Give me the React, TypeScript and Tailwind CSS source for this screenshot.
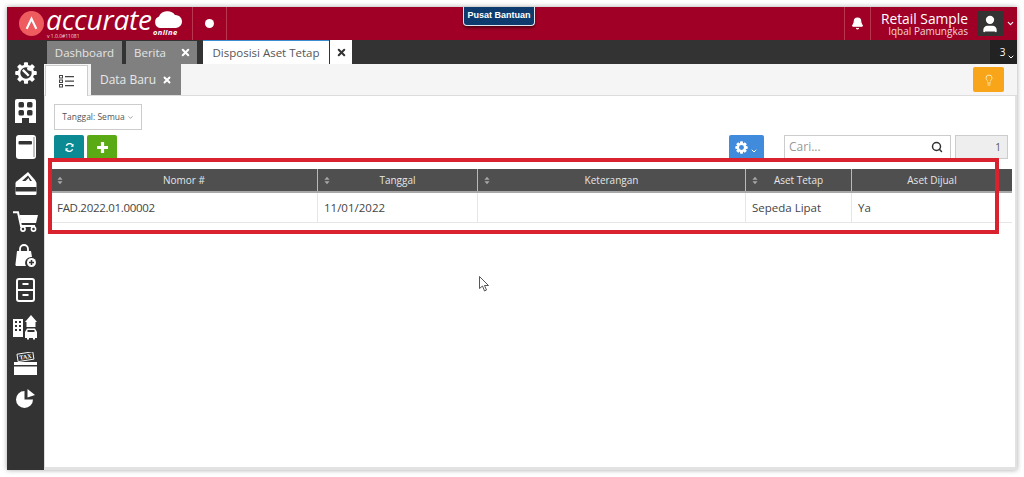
import { Bell, ChevronDown, Lightbulb, Search, User, X } from 'lucide-react';

const SANS = 'font-["Open_Sans",sans-serif]';

function SortIcon() {
  return (
    <svg width="6" height="9" viewBox="0 0 7 10" className="shrink-0">
      <path d="M3.5 0.5 L6.5 4 H0.5 Z M3.5 9.5 L0.5 6 H6.5 Z" fill="#a8a8a8" />
    </svg>
  );
}

function GearIcon({ size, hole = '#333333', color = 'white' }: { size: number; hole?: string; color?: string }) {
  return (
    <svg width={size} height={size} viewBox="0 0 24 24">
      <g fill={color}>
        {[0, 45, 90, 135, 180, 225, 270, 315].map((a) => (
          <rect key={a} x="9.5" y="1" width="5" height="22" rx="1" transform={`rotate(${a} 12 12)`} />
        ))}
        <circle cx="12" cy="12" r="8.5" />
      </g>
      <circle cx="12" cy="12" r="4.5" fill={hole} />
    </svg>
  );
}

function SideIcons() {
  return (
    <div className="flex flex-col items-center w-[37px] bg-[#333333] shrink-0">
      {/* settings */}
      <div className="h-[38px] flex items-center justify-center">
        <svg width="22" height="22" viewBox="0 0 24 24">
          <g fill="white">
            {[0, 45, 90, 135, 180, 225, 270, 315].map((a) => (
              <rect key={a} x="9.8" y="0.5" width="4.4" height="23" rx="1" transform={`rotate(${a} 12 12)`} />
            ))}
            <circle cx="12" cy="12" r="9" />
          </g>
          <circle cx="12" cy="12" r="6.2" fill="#333333" />
          <path d="M8.5 8.5 L15 15" stroke="white" strokeWidth="2.6" fill="none" />
          <path d="M13 6.5 A3.2 3.2 0 0 1 17.6 10 L15 9.2 L13.8 9 Z" fill="white" />
        </svg>
      </div>
      {/* company */}
      <div className="h-[38px] flex items-center justify-center">
        <svg width="21" height="24" viewBox="0 0 21 24">
          <path d="M2 0 H19 A2 2 0 0 1 21 2 V24 H14 V19 H7 V24 H0 V2 A2 2 0 0 1 2 0 Z" fill="white" />
          <rect x="3.5" y="3" width="5.5" height="5.5" rx="1.5" fill="#333333" />
          <rect x="12" y="3" width="5.5" height="5.5" rx="1.5" fill="#333333" />
          <rect x="3.5" y="11" width="5.5" height="5.5" rx="1.5" fill="#333333" />
          <rect x="12" y="11" width="5.5" height="5.5" rx="1.5" fill="#333333" />
        </svg>
      </div>
      {/* ledger */}
      <div className="h-[34px] flex items-center justify-center">
        <svg width="20" height="24" viewBox="0 0 20 24">
          <rect x="0" y="0" width="20" height="24" rx="3" fill="white" />
          <rect x="2.5" y="6" width="13.5" height="3.5" rx="1" fill="#333333" />
          <rect x="17.5" y="2" width="1" height="20" fill="#8a8a8a" />
        </svg>
      </div>
      {/* cash */}
      <div className="h-[38px] flex items-center justify-center">
        <svg width="22" height="24" viewBox="0 0 22 24">
          <path d="M1 11 L13 1 L20 9 L21 11 Z" fill="white" />
          <path d="M7 10 L13 4.5 L17 10 Z" fill="#333333" />
          <path d="M10.5 10 L13.5 7 L15 10 Z" fill="white" />
          <rect x="0.5" y="10.5" width="21" height="13.5" rx="1.5" fill="white" />
          <rect x="0.5" y="16" width="21" height="4.5" fill="#333333" />
        </svg>
      </div>
      {/* cart */}
      <div className="h-[38px] flex items-center justify-center">
        <svg width="25" height="21" viewBox="0 0 25 21">
          <path d="M0 1.2 H5 L8 15 H22" stroke="white" strokeWidth="2" fill="none" />
          <path d="M6.5 4 H25 L23 12 H8 Z" fill="white" />
          <circle cx="10" cy="18" r="2.1" fill="none" stroke="white" strokeWidth="1.6" />
          <circle cx="20.5" cy="18" r="2.1" fill="none" stroke="white" strokeWidth="1.6" />
        </svg>
      </div>
      {/* bag plus */}
      <div className="h-[32px] flex items-center justify-center">
        <svg width="22" height="24" viewBox="0 0 22 24">
          <path d="M5 7 V5 A4 4 0 0 1 13 5 V7" stroke="white" strokeWidth="1.8" fill="none" />
          <path d="M2 7 H16 L17 13 A6 6 0 0 0 11 22 H2 A1.5 1.5 0 0 1 0.5 20 Z" fill="white" />
          <circle cx="16.5" cy="18.5" r="4.5" fill="white" />
          <path d="M14 18.5 H19 M16.5 16 V21" stroke="#333333" strokeWidth="1.5" />
        </svg>
      </div>
      {/* cabinet */}
      <div className="h-[36px] flex items-center justify-center">
        <svg width="19" height="24" viewBox="0 0 19 24">
          <rect x="1" y="1" width="17" height="22" rx="2" fill="none" stroke="white" strokeWidth="2" />
          <rect x="1" y="11" width="17" height="2" fill="white" />
          <rect x="6.5" y="5" width="6" height="2" fill="white" />
          <rect x="6.5" y="16" width="6" height="2" fill="white" />
        </svg>
      </div>
      {/* assets */}
      <div className="h-[38px] flex items-center justify-center">
        <svg width="25" height="26" viewBox="0 0 25 26">
          <rect x="0" y="5" width="10" height="18" fill="white" />
          <g fill="#333333">
            <rect x="2" y="7" width="2" height="2" /><rect x="6" y="7" width="2" height="2" />
            <rect x="2" y="11" width="2" height="2" /><rect x="6" y="11" width="2" height="2" />
            <rect x="2" y="15" width="2" height="2" /><rect x="6" y="15" width="2" height="2" />
          </g>
          <path d="M12 8 L18 1 L24 8 H22.5 V13 H13.5 V8 Z" fill="white" />
          <path d="M12 18 L14 14.5 H22 L24 18 V24 H22 V25.5 H20 V24 H16 V25.5 H14 V24 H12 Z" fill="white" />
          <rect x="14.5" y="16" width="7" height="2" fill="#333333" />
        </svg>
      </div>
      {/* tax */}
      <div className="h-[34px] flex items-center justify-center">
        <svg width="23" height="23" viewBox="0 0 23 23">
          <g transform="rotate(-9 11 5)">
            <rect x="3.5" y="1" width="16" height="7.5" fill="none" stroke="white" strokeWidth="0.9" />
            <text x="11.5" y="7" textAnchor="middle" fontSize="6" fontWeight="700" fill="white" fontFamily="Liberation Serif, serif">TAX</text>
          </g>
          <rect x="0" y="10" width="23" height="3" fill="white" />
          <rect x="0" y="14.5" width="23" height="8.5" fill="white" />
        </svg>
      </div>
      {/* chart */}
      <div className="h-[38px] flex items-center justify-center">
        <svg width="20" height="20" viewBox="0 0 20 20">
          <path d="M8.5 2 V10.5 H17 A8.5 8.5 0 1 1 8.5 2 Z" fill="white" />
          <path d="M11.5 0 L19 6 L11.5 8.5 Z" fill="white" />
        </svg>
      </div>
    </div>
  );
}

function HeaderCell({ w, label, sort = true }: { w: string; label: string; sort?: boolean }) {
  return (
    <div className={`${w} shrink-0 h-full flex items-center pl-[6px] pr-[12px] border-r border-[#b9b9b9] last:border-r-0`}>
      {sort ? <SortIcon /> : <div className="w-[6px]" />}
      <span className="flex-1 text-center text-[10px] text-[#e6e6e6]">{label}</span>
    </div>
  );
}

function BodyCell({ w, text, cls = '' }: { w: string; text?: string; cls?: string }) {
  return (
    <div className={`${w} shrink-0 h-full flex items-center pl-[6px] border-r border-[#e6e6e6] last:border-r-0 text-[11.5px] text-[#444444] ${cls}`}>
      {text}
    </div>
  );
}

export default function App() {
  return (
    <div className={`relative w-[1024px] h-[477px] bg-white overflow-hidden p-[7px] ${SANS}`}>
      <div className="w-[1010px] h-[463px] flex flex-col shadow-[0_0_5px_rgba(0,0,0,0.35)]">
        {/* Top bar */}
        <div className="relative h-[33px] shrink-0 bg-[#a10026] flex items-stretch">
          <div className="w-[186px] flex items-center pl-[12px] border-r border-[#b8384f]">
            <div className="w-[25px] h-[25px] rounded-full bg-[#ee5c60] flex items-center justify-center shrink-0">
              <svg width="15" height="15" viewBox="0 0 14 14">
                <path d="M2.5 12 L7 2.5 L11.5 12" stroke="white" strokeWidth="2" fill="none" />
              </svg>
            </div>
            <div className="relative w-[140px] h-[33px] ml-[2px]">
              <span className="absolute left-0 top-[-1px] text-[28px] italic text-white leading-[26px] tracking-[-0.2px]">
                accurate
              </span>
              <span className="absolute left-[1px] top-[26px] text-[5px] text-[#f2d5da] leading-[6px] whitespace-nowrap">v 1.0.0#11081</span>
              <svg width="28" height="20" viewBox="0 0 28 20" className="absolute left-[108px] top-[1px]">
                <path d="M6 20 A6 6 0 0 1 5 8.5 A9 8 0 0 1 21 7 A6.5 6.5 0 0 1 22 20 Z" fill="white" />
              </svg>
              <span className="absolute left-[107px] top-[21px] text-[7.5px] font-bold italic text-white leading-[9px] tracking-[0.4px]">online</span>
            </div>
          </div>
          <div className="w-[34px] flex items-center justify-center border-r border-[#b8384f]">
            <div className="w-[9px] h-[9px] rounded-full bg-white" />
          </div>
          <div className="flex-1" />
          {/* Help tab */}
          <div className="absolute left-[456px] top-0 h-[19px] w-[72px] bg-[#0d3b6e] border border-[#dfe6ee] border-t-0 rounded-b-[4px] shadow-[0_2px_3px_rgba(0,0,0,0.5)] flex items-center justify-center">
            <span className="text-[9px] font-bold text-white font-['Liberation_Sans',sans-serif] whitespace-nowrap">Pusat Bantuan</span>
          </div>
          <div className="w-[27px] flex items-center justify-center border-x border-[#b8384f]">
            <Bell size={13} fill="white" stroke="white" />
          </div>
          <div className="w-[97px] flex flex-col items-end justify-center">
            <span className="text-[13.8px] leading-[15px] text-white whitespace-nowrap">Retail Sample</span>
            <span className="text-[10px] leading-[11px] text-[#f0d5da] whitespace-nowrap">Iqbal Pamungkas</span>
          </div>
          <div className="w-[26px] h-[25px] ml-[9px] mt-[4px] bg-[#333333] flex items-center justify-center">
            <User size={20} fill="white" stroke="white" />
          </div>
          <div className="w-[14px] flex items-center justify-center">
            <ChevronDown size={9} stroke="white" strokeWidth={3} />
          </div>
        </div>

        {/* Tab bar row + body */}
        <div className="flex flex-1 min-h-0">
          <div className="flex flex-col w-[37px] shrink-0 bg-[#333333]">
            <div className="h-[14px] shrink-0" />
            <SideIcons />
          </div>
          <div className="flex-1 flex flex-col min-w-0">
            {/* Document tabs */}
            <div className="h-[24px] shrink-0 bg-[#333333] flex items-stretch pl-[3px]">
              <div className="w-[75px] bg-[#808080] flex items-center justify-center text-[11.5px] text-[#e4e4e4] mt-[1px]">Dashboard</div>
              <div className="w-[71px] ml-[4px] bg-[#808080] flex items-center justify-between pl-[8px] pr-[6px] text-[11.5px] text-[#e4e4e4] mt-[1px]">
                Berita <X size={11} stroke="white" strokeWidth={4.5} />
              </div>
              <div className="ml-[6px] w-[126px] bg-white border-t border-[#3b8fd0] flex items-center justify-center text-[11.5px] text-[#555555]">
                Disposisi Aset Tetap
              </div>
              <div className="w-[22px] ml-[1px] bg-white flex items-center justify-center">
                <X size={11} stroke="#333333" strokeWidth={4.5} />
              </div>
              <div className="flex-1" />
              <div className="w-[27px] bg-[#222222] flex items-center justify-center text-[10px] text-white relative">
                <span className="mr-[2px]">3</span>
                <ChevronDown size={8} stroke="white" strokeWidth={3} className="absolute right-[2px] bottom-[3px]" />
              </div>
            </div>

            {/* Form tabs */}
            <div className="h-[32px] shrink-0 bg-[#f5f5f5] border-b border-[#dddddd] flex items-end pl-[1px] relative">
              <div className="w-[43px] h-[31px] bg-white border border-[#cccccc] border-b-0 flex items-center justify-center -mb-px">
                <svg width="15" height="13" viewBox="0 0 15 13">
                  <g fill="none" stroke="#444444" strokeWidth="1">
                    <rect x="0.5" y="0.5" width="3" height="2.5" />
                    <rect x="0.5" y="5" width="3" height="2.5" />
                    <rect x="0.5" y="9.5" width="3" height="2.5" />
                    <path d="M6 1.7 H15 M6 6.2 H15 M6 10.7 H15" strokeWidth="1.3" />
                  </g>
                </svg>
              </div>
              <div className="w-[90px] h-[31px] ml-[3px] bg-[#808080] flex items-center justify-center gap-[6px] text-[12px] text-[#e8e8e8]">
                Data Baru <X size={10} stroke="white" strokeWidth={4.5} />
              </div>
              <div className="absolute right-[13px] top-[3px] w-[31px] h-[25px] bg-[#f9a51a] rounded-[2px] flex items-center justify-center">
                <Lightbulb size={12} stroke="#fde9b0" strokeWidth={2} />
              </div>
            </div>

            {/* Content */}
            <div className="flex-1 bg-white pl-[6px] flex flex-col min-h-0 border-l border-[#dddddd] border-r-[2px] border-r-[#e2e2e2] border-b-[3px] border-b-[#e2e2e2]">
              <div className="mt-[8px] pl-[3px]">
                <div className="w-[88px] h-[26px] border border-[#cccccc] flex items-center justify-center gap-[2px] text-[8.5px] text-[#555555]">
                  Tanggal: Semua <ChevronDown size={7} stroke="#666666" />
                </div>
              </div>
              <div className="mt-[5px] h-[34px] flex items-start pl-[3px]">
                <div className="w-[30px] h-[25px] bg-[#0b8a93] rounded-t-[2px] flex items-center justify-center">
                  <svg width="9" height="9" viewBox="0 0 10 10">
                    <path d="M8.5 2.5 A4 4 0 0 0 1.5 3 M1.5 7.5 A4 4 0 0 0 8.5 7" stroke="white" strokeWidth="1.6" fill="none" />
                    <path d="M9.5 0.8 V4.2 H6.3 Z M0.5 9.2 V5.8 H3.7 Z" fill="white" />
                  </svg>
                </div>
                <div className="w-[30px] h-[25px] ml-[3px] bg-[#5aaa15] rounded-t-[2px] flex items-center justify-center">
                  <svg width="13" height="13" viewBox="0 0 13 13">
                    <path d="M6.5 1 V12 M1 6.5 H12" stroke="white" strokeWidth="3.2" />
                  </svg>
                </div>
                <div className="flex-1" />
                <div className="w-[35px] h-[25px] bg-[#418bdc] rounded-t-[2px] flex items-center justify-center gap-[2px]">
                  <GearIcon size={13} hole="#418bdc" />
                  <ChevronDown size={8} stroke="white" strokeWidth={3} className="mt-[6px]" />
                </div>
                <div className="w-[167px] h-[24px] ml-[20px] border border-[#cccccc] flex items-center justify-between pl-[4px] pr-[7px] text-[12px] text-[#999999]">
                  Cari...
                  <Search size={12} stroke="#333333" strokeWidth={3} />
                </div>
                <div className="w-[53px] h-[24px] ml-[4px] mr-[7px] bg-[#eeeeee] border border-[#cccccc] flex items-center justify-end pr-[6px] text-[10px] text-[#555555]">
                  1
                </div>
              </div>

              {/* Table */}
              <div className="w-[961px]">
                <div className="h-[24px] bg-[#4f4f4f] flex items-center border-b-2 border-[#a8a8a8]">
                  <HeaderCell w="w-[267px]" label="Nomor #" />
                  <HeaderCell w="w-[160px]" label="Tanggal" />
                  <HeaderCell w="w-[268px]" label="Keterangan" />
                  <HeaderCell w="w-[106px]" label="Aset Tetap" />
                  <HeaderCell w="w-[160px]" label="Aset Dijual" sort={false} />
                </div>
                <div className="h-[30px] flex items-center border-b border-[#e6e6e6]">
                  <BodyCell w="w-[267px]" text="FAD.2022.01.00002" cls="tracking-[-0.3px]" />
                  <BodyCell w="w-[160px]" text="11/01/2022" />
                  <BodyCell w="w-[268px]" />
                  <BodyCell w="w-[106px]" text="Sepeda Lipat" />
                  <BodyCell w="w-[160px]" text="Ya" />
                </div>
              </div>
            </div>
          </div>
        </div>
      </div>

      {/* Annotation box */}
      <div className="absolute left-[48px] top-[158px] w-[951px] h-[76px] border-[4px] border-[#d9222e] pointer-events-none" />

      {/* Mouse pointer */}
      <svg width="11" height="16" viewBox="0 0 11 16" className="absolute left-[479px] top-[276px]">
        <path d="M0.5 0.5 V12.5 L3.5 10 L5.5 15 L7.5 14 L5.5 9.5 H9.5 Z" fill="white" stroke="#444444" strokeWidth="0.9" />
      </svg>
    </div>
  );
}
